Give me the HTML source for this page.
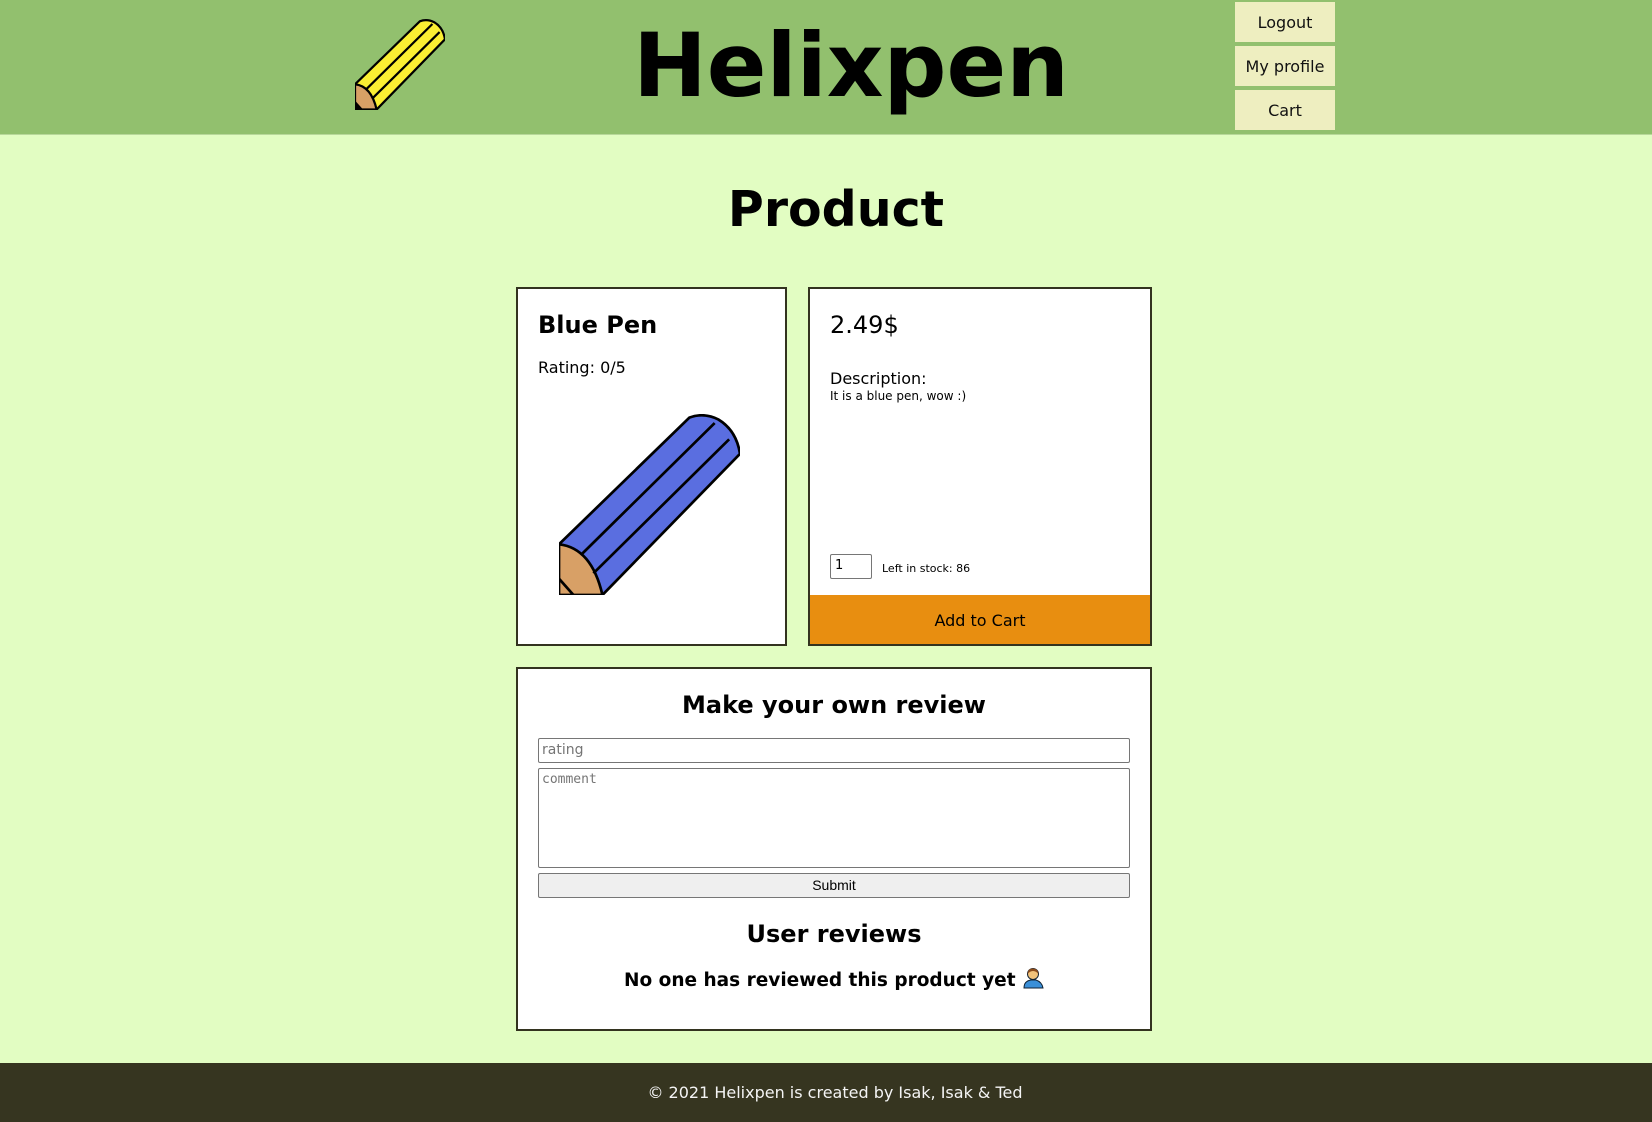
<!DOCTYPE html>
<html><head><meta charset="utf-8"><style>
*{margin:0;padding:0;box-sizing:border-box}
body{width:1652px;height:1122px;background:#e2fdc2;font-family:"DejaVu Sans","Liberation Sans",sans-serif;position:relative;overflow:hidden;color:#000}
.a{position:absolute;line-height:1;white-space:nowrap}
.hdr{position:absolute;left:0;top:0;width:1652px;height:135px;background:#92c06e;border-bottom:1px solid #b8d89a}
.btn{position:absolute;left:1235px;width:100px;height:40px;background:#eeeec0;font-size:16px;display:flex;align-items:center;justify-content:center;color:#111}
.card{position:absolute;background:#fff;border:2px solid #33331f}
.c{left:0;width:1652px;text-align:center}
</style></head><body>
<div class="hdr"></div>
<svg style="position:absolute;left:355px;top:19px" width="90" height="91" viewBox="0 0 100 100">
<path d="M0,72 L72,2 Q80,-1 88,3 Q98,9 100,22 L24,100 L0,100 Z" fill="#fbef33" stroke="#000" stroke-width="2.5"/>
<path d="M0,72 Q18,74 24,100 L0,100 Z" fill="#d8a066" stroke="#000" stroke-width="2.5"/>
<path d="M0,90 L9,100 L0,100 Z" fill="#000"/>
<path d="M13,77 L86,5 M19,88 L94,14" stroke="#000" stroke-width="2.5" fill="none"/>
</svg>
<div class="a" style="left:0;width:1702px;text-align:center;top:22px;font-size:88px;font-weight:bold">Helixpen</div>
<div class="btn" style="top:2px">Logout</div>
<div class="btn" style="top:46px">My profile</div>
<div class="btn" style="top:90px">Cart</div>

<div class="a c" style="top:185px;font-size:49px;font-weight:bold;width:1672px">Product</div>

<div class="card" style="left:516px;top:287px;width:271px;height:359px"></div>
<div class="a" style="left:538px;top:313px;font-size:24px;font-weight:bold">Blue Pen</div>
<div class="a" style="left:538px;top:360px;font-size:16px">Rating: 0/5</div>
<svg style="position:absolute;left:559px;top:414px" width="181" height="181" viewBox="0 0 100 100">
<path d="M0,72 L72,2 Q80,-1 88,3 Q98,9 100,22 L24,100 L0,100 Z" fill="#5a6ee0" stroke="#000" stroke-width="1.5"/>
<path d="M0,72 Q18,74 24,100 L0,100 Z" fill="#d8a066" stroke="#000" stroke-width="1.5"/>
<path d="M0,91 L8,100" stroke="#000" stroke-width="1.5"/>
<path d="M13,77 L86,5 M19,88 L94,14" stroke="#000" stroke-width="1.5" fill="none"/>
</svg>

<div class="card" style="left:808px;top:287px;width:344px;height:359px;overflow:hidden">
<div style="position:absolute;left:0;bottom:0;width:100%;height:49px;background:#e88e10"></div>
</div>
<div class="a" style="left:830px;top:313px;font-size:24px">2.49$</div>
<div class="a" style="left:830px;top:371px;font-size:16px">Description:</div>
<div class="a" style="left:830px;top:390px;font-size:12px">It is a blue pen, wow :)</div>
<div style="position:absolute;left:830px;top:554px;width:42px;height:25px;border:1px solid #767676;border-radius:2px;background:#fff;font-size:13px;padding:3px 4px;color:#000">1</div>
<div class="a" style="left:882px;top:563px;font-size:11px">Left in stock: 86</div>
<div class="a" style="left:808px;width:344px;text-align:center;top:613px;font-size:16px">Add to Cart</div>

<div class="card" style="left:516px;top:667px;width:636px;height:364px"></div>
<div class="a c" style="top:693px;font-size:24px;font-weight:bold;width:1668px">Make your own review</div>
<div style="position:absolute;left:538px;top:738px;width:592px;height:25px;border:1px solid #767676;border-radius:2px;background:#fff;font-size:14px;color:#757575;padding:3px 3px;font-family:'DejaVu Sans',sans-serif">rating</div>
<div style="position:absolute;left:538px;top:768px;width:592px;height:100px;border:1px solid #767676;border-radius:2px;background:#fff;font-size:13px;color:#757575;padding:3px 3px;font-family:'DejaVu Sans Mono','Liberation Mono',monospace">comment</div>
<div style="position:absolute;left:538px;top:873px;width:592px;height:25px;border:1px solid #767676;border-radius:2px;background:#efefef;font-size:14px;color:#000;text-align:center;line-height:23px;font-family:'Liberation Sans',sans-serif">Submit</div>
<div class="a c" style="top:922px;font-size:24px;font-weight:bold;width:1668px">User reviews</div>
<div class="a c" style="top:967px;font-size:18.5px;font-weight:bold;width:1668px">No one has reviewed this product yet <svg style="vertical-align:-3px" width="22" height="22" viewBox="0 0 22 22">
<path d="M2,21 Q2,14 9,13 L14,13 Q20,15 21,21 Z" fill="#3a8fd8" stroke="#123" stroke-width="1"/>
<circle cx="11" cy="7" r="5.5" fill="#f2c27a" stroke="#123" stroke-width="1"/>
<path d="M5.5,7 Q6,1 11,1.5 Q16,1.5 16.5,7 Q14,4 11,4 Q8,4 5.5,7Z" fill="#8a4a1a"/>
</svg></div>

<div style="position:absolute;left:0;top:1063px;width:1652px;height:59px;background:#363520"></div>
<div class="a c" style="top:1085px;font-size:16px;color:#f4f4f4;width:1670px">© 2021 Helixpen is created by Isak, Isak &amp; Ted</div>
</body></html>
